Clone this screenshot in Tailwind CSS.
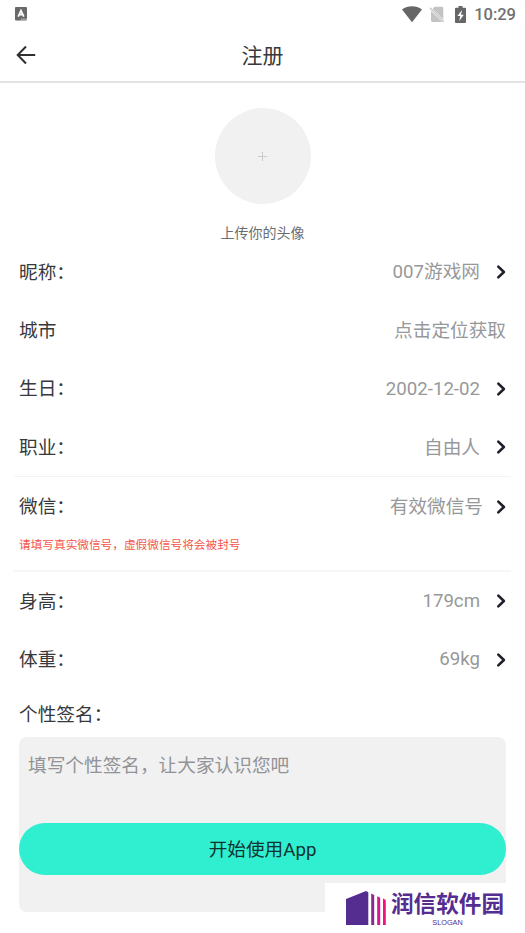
<!DOCTYPE html>
<html lang="zh-CN">
<head>
<meta charset="utf-8">
<title>注册</title>
<script src="https://cdn.jsdelivr.net/npm/@tailwindcss/browser@4"></script>
</head>
<body class="relative h-[933px] w-[525px] overflow-hidden bg-white font-[Roboto,'Noto_Sans_CJK_SC',sans-serif] text-[18.67px] leading-none text-[#38393c]">
<svg class="hidden">
  <symbol id="chev" viewBox="0 0 10 16"><path d="M2.300 2.600 7.900 8l-5.600 5.400" fill="none" stroke="#20202c" stroke-width="2.600" stroke-linecap="round" stroke-linejoin="round"/></symbol>
</svg>

<div class="flex h-7 items-center justify-between pr-[9px] pl-[15px]">
  <svg class="h-[14px] w-3" viewBox="0 0 12 14"><rect width="12" height="13.5" rx="1" fill="#696969"/><path d="M3.2 9.700 6 3.600l2.800 6.100M4.300 7.700h3.400" fill="none" stroke="#fff" stroke-width="1.7"/><path d="M6 12.200h6" stroke="#ddd" stroke-width="1" stroke-dasharray="1.5 .7"/></svg>
  <div class="flex items-center">
    <svg class="mr-[7px] h-[17px] w-[20px]" viewBox="0 0 20 17"><path d="M0 3.400C6-.8 14-.8 20 3.400L10 16.300z" fill="#666"/></svg>
    <svg class="mr-[10px] h-[17px] w-[16px]" viewBox="0 0 16 17"><path d="M5.500.7H13a1.300 1.300 0 0 1 1.300 1.300v11.500L3.700 3zM2 4.900l11.500 11H3.200A1.300 1.300 0 0 1 2 14.600z" fill="#c3c3c3"/><path d="m.8 1.800 14 14" stroke="#c3c3c3" stroke-width="1.300"/></svg>
    <svg class="mr-[8px] h-[17px] w-[11px]" viewBox="0 0 11 17"><path d="M3.500 0h4v1.700H10a1 1 0 0 1 1 1v13.300a1 1 0 0 1-1 1H1a1 1 0 0 1-1-1V2.700a1 1 0 0 1 1-1h2.500z" fill="#666"/><path d="M7 4 2.400 10h2.800L4.300 15 8.800 8.700H6z" fill="#fff"/></svg>
    <span class="pt-[2px] text-[16.500px] font-medium text-[#707070]">10:29</span>
  </div>
</div>

<header class="grid h-[55px] grid-cols-[1fr_auto_1fr] items-center border-b-2 border-[#e3e3e3] px-4">
  <svg class="h-5 w-5" viewBox="0 0 20 20"><path d="M19.200 10H2M10 1.500 1.700 10l8.300 8.500" fill="none" stroke="#303030" stroke-width="2"/></svg>
  <h1 class="pt-[3px] text-[21px]">注册</h1>
</header>

<section class="flex flex-col items-center pt-[25px]">
  <div class="flex h-24 w-24 items-center justify-center rounded-full bg-[#f1f1f1]">
    <svg class="h-[9px] w-[9px]" viewBox="0 0 9 9"><path d="M4.500 0v9M0 4.500h9" stroke="#ccc"/></svg>
  </div>
  <p class="mt-[22px] h-[17px] text-[14px] text-[#6a6c70]">上传你的头像</p>
</section>

<main class="px-[14px]">
  <div class="h-[234px] border-b border-[#f2f2f2] pr-[5px] pl-[5px]">
    <div class="flex h-[58.400px] items-center"><span class="pt-[2px]">昵称：</span><span class="mr-[16px] ml-auto pt-[1px] text-[#97989a]">007游戏网</span><svg class="h-4 w-[10px]"><use href="#chev"/></svg></div>
    <div class="flex h-[58.400px] items-center"><span class="pt-[2px]">城市</span><span class="ml-auto pt-[2px] text-[#97989a]">点击定位获取</span></div>
    <div class="flex h-[58.400px] items-center"><span class="pt-[1px]">生日：</span><span class="mr-[16px] ml-auto text-[#97989a]">2002-12-02</span><svg class="h-4 w-[10px]"><use href="#chev"/></svg></div>
    <div class="flex h-[58.400px] items-center"><span class="pt-[2px]">职业：</span><span class="mr-[16px] ml-auto pt-[2px] text-[#97989a]">自由人</span><svg class="h-4 w-[10px]"><use href="#chev"/></svg></div>
  </div>
  <div class="h-[95px] border-b-2 border-[#f6f6f6] pr-[5px] pl-[5px]">
    <div class="flex h-[59px] items-center"><span class="pt-[2px]">微信：</span><span class="mr-[13px] ml-auto pt-[2px] text-[#97989a]">有效微信号</span><svg class="h-4 w-[10px]"><use href="#chev"/></svg></div>
    <p class="pt-[4px] text-[11.670px] text-[#f5554a]">请填写真实微信号，虚假微信号将会被封号</p>
  </div>
  <div class="pr-[5px] pl-[5px]">
    <div class="flex h-[58.400px] items-center"><span class="pt-[2px]">身高：</span><span class="mr-[16px] ml-auto text-[#97989a]">179cm</span><svg class="h-4 w-[10px]"><use href="#chev"/></svg></div>
    <div class="flex h-[58.400px] items-center"><span class="pt-[2px]">体重：</span><span class="mr-[16px] ml-auto text-[#97989a]">69kg</span><svg class="h-4 w-[10px]"><use href="#chev"/></svg></div>
    <h2 class="h-[48.500px] pt-[17px]">个性签名：</h2>
    <div class="h-[174.500px] w-full rounded-lg bg-[#f1f1f1] pt-[20px]">
      <p class="h-[66px] pl-[9px] text-[#929396]">填写个性签名，让大家认识您吧</p>
      <button class="flex h-[51.500px] w-full items-center justify-center rounded-full bg-[#30eed0] pt-[2px] text-[#10332f]">开始使用App</button>
    </div>
  </div>
</main>

<aside class="absolute top-[883px] left-[325px] flex h-[50px] w-[200px] bg-white pt-[8px] pl-[21px]">
  <svg class="h-[34px] w-[40px]" viewBox="0 0 40 34"><path d="M0 8 20 0l2.300 1.200V34H0z" fill="#552d91"/><path d="M25.200 2.400l3 1.500V34h-3z" fill="#8b2b90"/><path d="M31.200 5.200l3 1.500V34h-3z" fill="#d9178a"/><path d="M37 7.500l2.800 1.400V34H37z" fill="#f6107d"/></svg>
  <div class="ml-[5px] flex w-[113px] flex-col items-center font-['Noto_Sans_CJK_SC',sans-serif] text-[#552d91]">
    <span class="pt-[1px] text-[22.600px] font-bold whitespace-nowrap">润信软件园</span>
    <span class="mt-[4px] font-['Liberation_Sans',sans-serif] text-[7.300px]">SLOGAN</span>
  </div>
</aside>
</body>
</html>
